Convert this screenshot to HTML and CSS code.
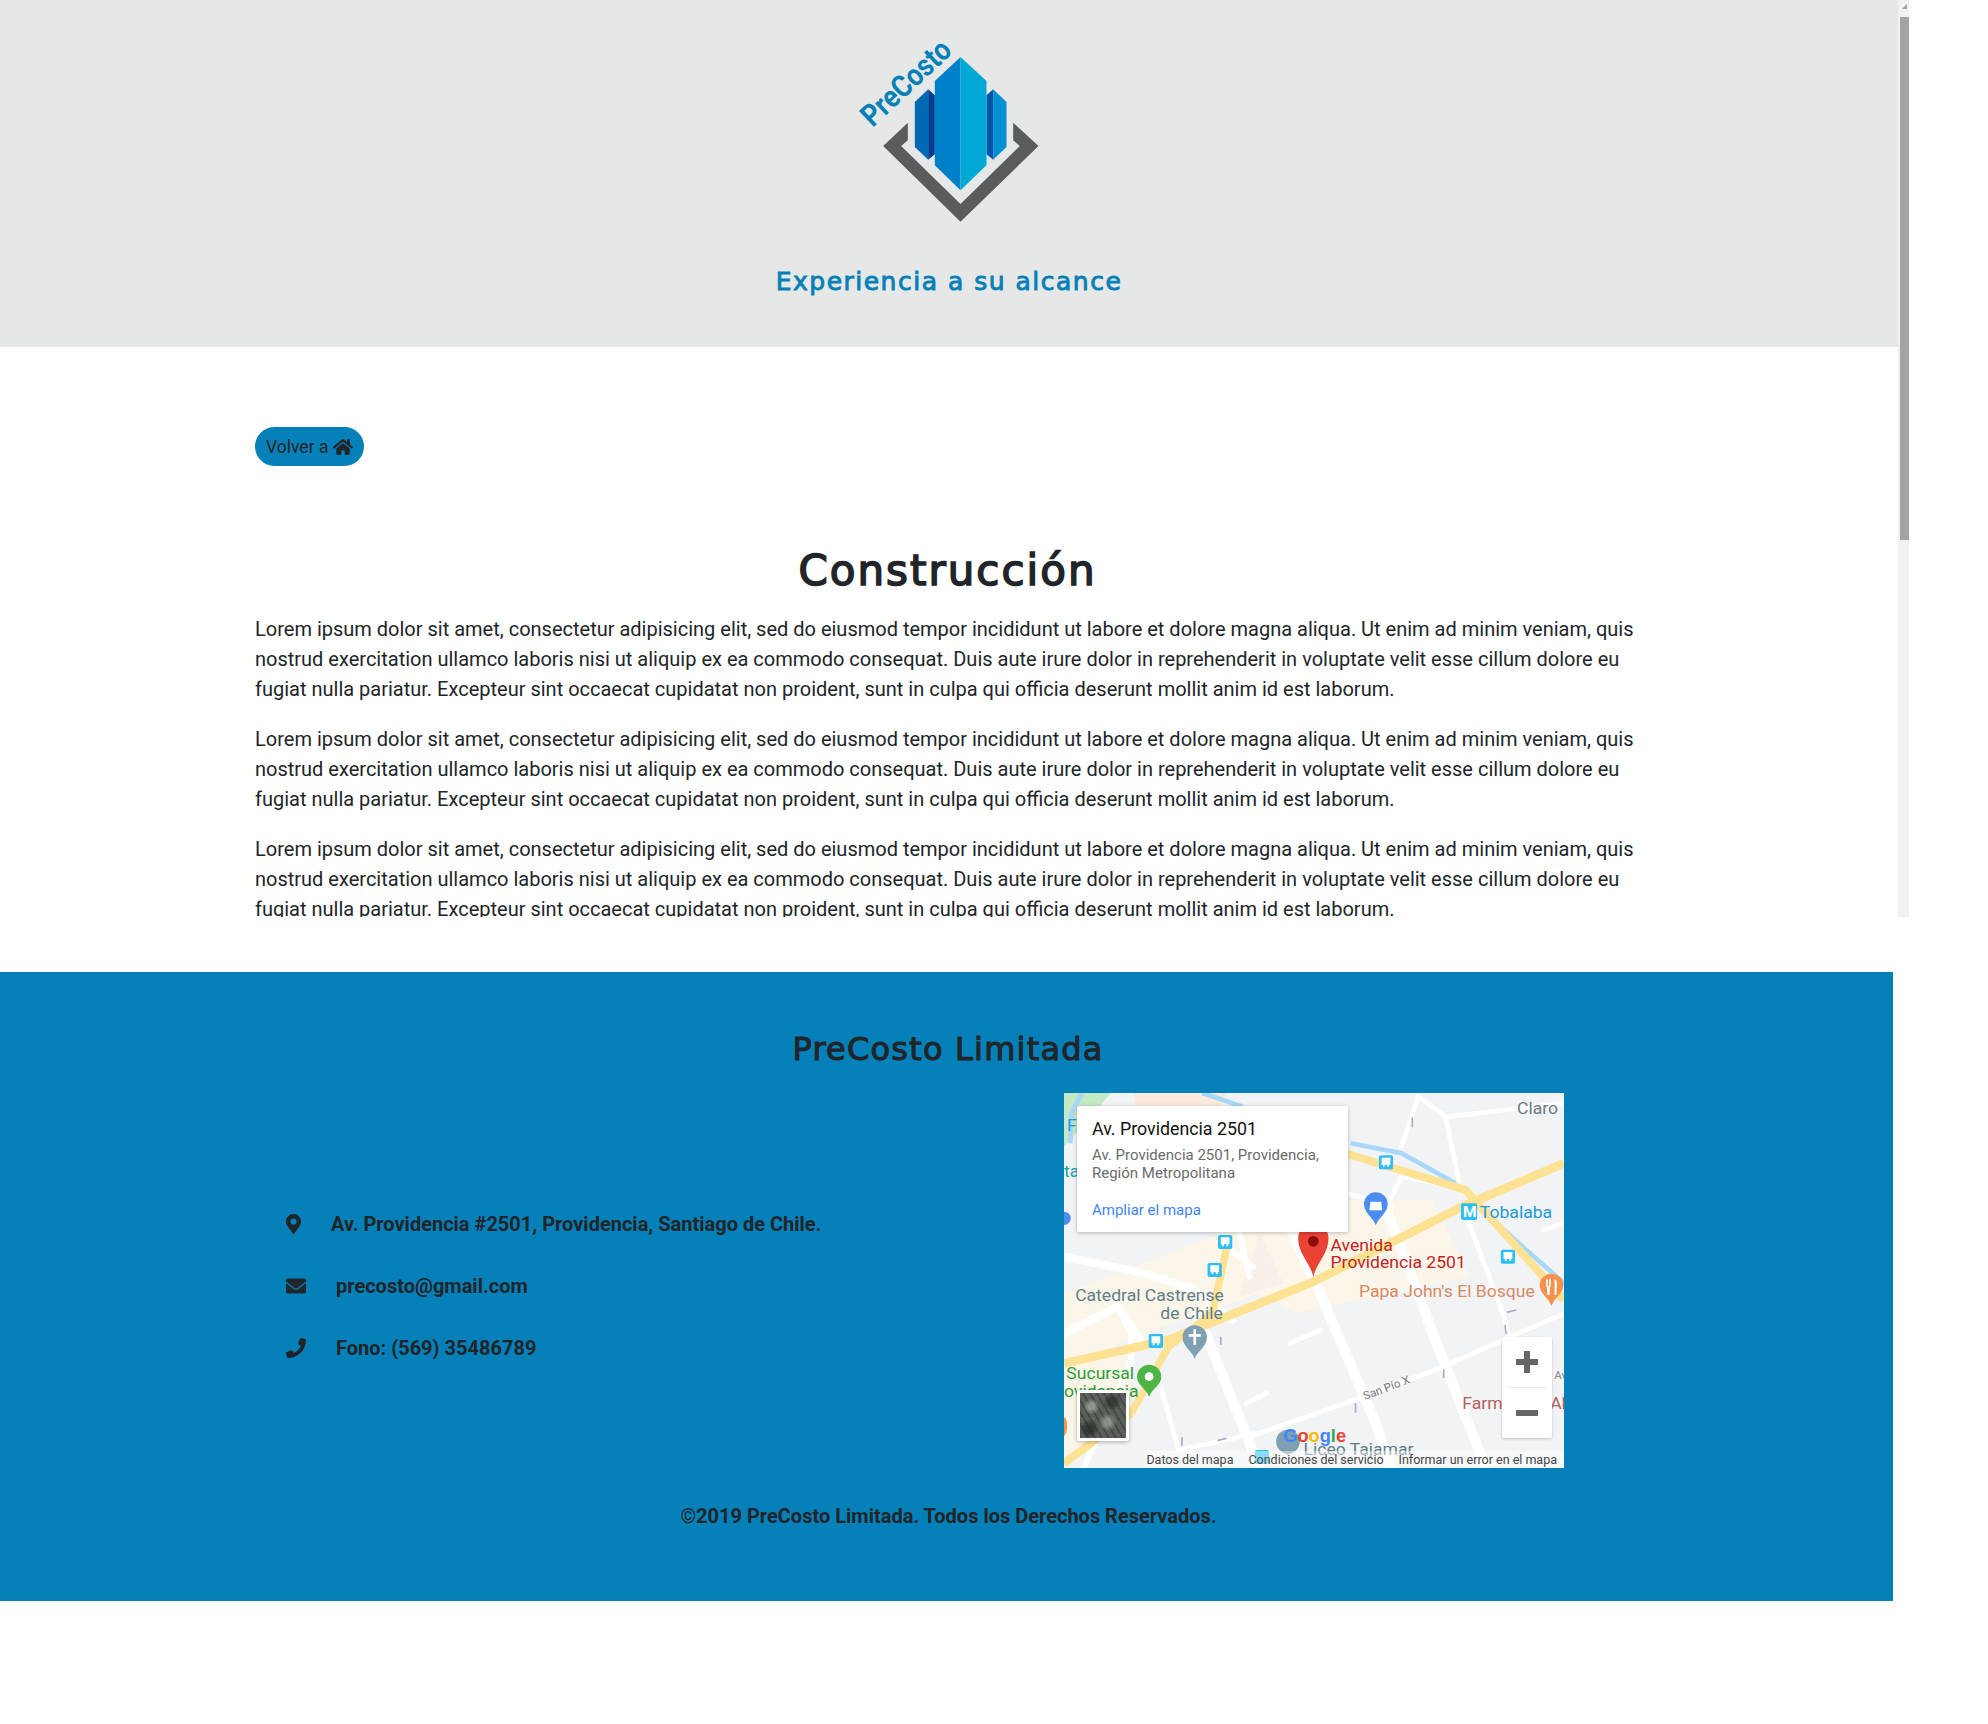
FILE: index.html
```html
<!DOCTYPE html>
<html lang="es">
<head>
  <meta charset="UTF-8" />
  <title>PreCosto Limitada</title>
  <link rel="stylesheet" href="styles.css">
</head>
<body>
  <div class="frame">
    <div class="frame-content">
      <header class="site-header">
        <svg class="logo" viewBox="295 125 545 540" aria-label="PreCosto">
          <polygon fill="#5a5b5d" points="444,367 370,437 602,664 836,437 760,367 760,420 780,437 602,611 424,437 444,420"/>
          <polygon fill="#0069b4" points="505,267 465,305 465,440 505,478"/>
          <polygon fill="#003e92" points="505,267 525,285 525,462 505,478"/>
          <polygon fill="#0057a8" points="700,267 680,285 680,462 700,478"/>
          <polygon fill="#008fd5" points="700,267 740,305 740,440 700,478"/>
          <polygon fill="#0080c6" points="602,170 525,242 525,495 602,570"/>
          <polygon fill="#00a8d6" points="602,170 680,242 680,495 602,570"/>
          <text class="logo-text" x="0" y="0" transform="translate(338,383) rotate(-43)" textLength="332" lengthAdjust="spacingAndGlyphs">PreCosto</text>
        </svg>
        <h2 class="tagline">Experiencia a su alcance</h2>
      </header>

      <main class="content">
        <a class="btn-back" href="#">Volver a
          <svg class="icon-home" viewBox="0 0 576 512"><path d="M280 148 96 300v164c0 9 7 16 16 16l112-1c9 0 16-7 16-16v-95c0-9 7-16 16-16h64c9 0 16 7 16 16v95c0 9 7 16 16 16l112 1c9 0 16-7 16-16V300L296 148c-4-4-12-4-16 0zM572 251l-84-69V44c0-7-5-12-12-12h-56c-7 0-12 5-12 12v72l-89-74c-18-14-43-14-61 0L4 251c-5 4-6 12-2 17l26 31c4 5 12 6 17 2L280 107c4-4 12-4 16 0l235 194c5 4 13 3 17-2l26-31c4-5 3-13-2-17z"/></svg>
        </a>
        <h1 class="page-title">Construcción</h1>
        <p>Lorem ipsum dolor sit amet, consectetur adipisicing elit, sed do eiusmod tempor incididunt ut labore et dolore magna aliqua. Ut enim ad minim veniam, quis nostrud exercitation ullamco laboris nisi ut aliquip ex ea commodo consequat. Duis aute irure dolor in reprehenderit in voluptate velit esse cillum dolore eu fugiat nulla pariatur. Excepteur sint occaecat cupidatat non proident, sunt in culpa qui officia deserunt mollit anim id est laborum.</p>
        <p>Lorem ipsum dolor sit amet, consectetur adipisicing elit, sed do eiusmod tempor incididunt ut labore et dolore magna aliqua. Ut enim ad minim veniam, quis nostrud exercitation ullamco laboris nisi ut aliquip ex ea commodo consequat. Duis aute irure dolor in reprehenderit in voluptate velit esse cillum dolore eu fugiat nulla pariatur. Excepteur sint occaecat cupidatat non proident, sunt in culpa qui officia deserunt mollit anim id est laborum.</p>
        <p>Lorem ipsum dolor sit amet, consectetur adipisicing elit, sed do eiusmod tempor incididunt ut labore et dolore magna aliqua. Ut enim ad minim veniam, quis nostrud exercitation ullamco laboris nisi ut aliquip ex ea commodo consequat. Duis aute irure dolor in reprehenderit in voluptate velit esse cillum dolore eu fugiat nulla pariatur. Excepteur sint occaecat cupidatat non proident, sunt in culpa qui officia deserunt mollit anim id est laborum.</p>
      </main>
    </div>
    <div class="scrollbar">
      <div class="scroll-arrow"></div>
      <div class="scroll-thumb"></div>
    </div>
  </div>

  <footer class="site-footer">
    <h2 class="footer-title">PreCosto Limitada</h2>
    <div class="footer-row">
      <ul class="contact-list">
        <li class="contact-item">
          <svg class="icon icon-pin" viewBox="0 0 384 512"><path d="M172 502C27 291 0 269 0 192 0 86 86 0 192 0s192 86 192 192c0 77-27 99-172 310-10 14-30 14-40 0zm20-230a80 80 0 1 0 0-160 80 80 0 0 0 0 160z"/></svg>
          Av. Providencia #2501, Providencia, Santiago de Chile.
        </li>
        <li class="contact-item contact-wide">
          <svg class="icon" viewBox="0 0 512 512"><path d="M502 191c4-3 10 0 10 5v204c0 27-21 48-48 48H48c-27 0-48-21-48-48V196c0-5 6-8 10-5 22 17 52 39 154 113 21 15 57 48 92 48s72-33 92-48c102-74 132-96 154-113zM256 320c23 0 57-29 73-41 133-96 143-105 174-129 6-5 9-12 9-19v-19c0-27-21-48-48-48H48C21 64 0 85 0 112v19c0 7 3 14 9 19 31 24 41 33 174 129 16 12 50 41 73 41z"/></svg>
          precosto@gmail.com
        </li>
        <li class="contact-item contact-wide">
          <svg class="icon" viewBox="0 0 512 512"><path d="m493 24-104-24c-11-3-23 3-27 14l-48 112c-4 10-1 21 7 28l60 50c-36 77-99 140-177 177l-50-60c-7-8-18-11-28-7L14 362c-11 5-17 16-14 28l24 104c2 10 12 18 23 18 256 0 465-207 465-464 0-11-8-21-19-24z"/></svg>
          Fono: (569) 35486789
        </li>
      </ul>

      <div class="map">
        <svg class="map-canvas" viewBox="41 39 1480 1125" preserveAspectRatio="none">
          <rect x="41" y="39" width="1480" height="1125" fill="#f1f3f4"/>
          <!-- blocks -->
          <polygon fill="#fbf6e8" points="41,640 250,560 560,440 880,360 1130,360 1240,590 730,700 620,640 280,760 41,860"/>
          <polygon fill="#f8eeea" points="560,650 620,460 690,610"/>
          <polygon fill="#c5e8c5" points="41,39 180,39 41,200"/>
          <polygon fill="#fde9d9" points="250,39 520,39 500,100 250,100"/>
          <polygon fill="#fbf6e8" points="41,860 240,800 240,1000 41,1150"/>
          <!-- white streets -->
          <g fill="none" stroke="#fff" stroke-linecap="round">
            <path stroke-width="24" d="M41 530 280 580 430 630 540 720M41 760 200 680 280 800 360 780"/>
            <path stroke-width="30" d="M700 420 790 620 960 1020 1010 1164"/>
            <path stroke-width="30" d="M460 760 620 1164M1000 400 1140 780 1290 1164"/>
            <path stroke-width="14" d="M1090 50 1170 110 1210 300 M1180 110 1521 70M1040 200 1090 50M880 340 1010 380M1000 370 1040 290 1150 310M1240 430 1340 700 1420 1000"/>
            <path stroke-width="14" d="M590 1070 930 950 1140 870 1521 700M330 930 380 1110 520 1080 610 1060M710 790 800 750M580 970 640 940M1460 450 1521 430"/>
            <path stroke-width="18" d="M560 460 590 590M520 500 600 560M200 680 240 760 240 840 100 1164"/>
          </g>
          <!-- canal -->
          <g fill="none" stroke="#a8d8f8" stroke-width="14">
            <path d="M890 190 1040 220 1200 310M1310 420 1521 610"/>
            <path d="M60 190 62 100 95 40M450 39 570 80"/>
          </g>
          <!-- avenues -->
          <g fill="none" stroke="#fde293" stroke-linecap="butt">
            <path stroke-width="26" d="M41 850 350 780 780 605 1230 375 1521 250"/>
            <path stroke-width="22" d="M240 1000 350 800 480 700 530 470"/>
            <path stroke-width="24" d="M41 1150 240 1000"/>
            <path stroke-width="24" d="M880 222 1230 330 1521 660"/>
          </g>
          <!-- bus stops -->
          <g fill="#2ebdf5">
            <rect x="973" y="226" width="42" height="42" rx="5"/>
            <rect x="497" y="465" width="42" height="42" rx="5"/>
            <rect x="466" y="549" width="42" height="42" rx="5"/>
            <rect x="292" y="762" width="42" height="42" rx="5"/>
            <rect x="1334" y="509" width="42" height="42" rx="5"/>
            <rect x="606" y="1110" width="42" height="42" rx="5"/>
          </g>
          <g fill="#fff">
            <path d="M981 233h26v21h-4v6h-5v-6h-8v6h-5v-6h-4z"/>
            <path d="M505 472h26v21h-4v6h-5v-6h-8v6h-5v-6h-4z"/>
            <path d="M474 556h26v21h-4v6h-5v-6h-8v6h-5v-6h-4z"/>
            <path d="M300 769h26v21h-4v6h-5v-6h-8v6h-5v-6h-4z"/>
            <path d="M1342 516h26v21h-4v6h-5v-6h-8v6h-5v-6h-4z"/>
          </g>
          <!-- metro -->
          <rect x="1216" y="370" width="48" height="50" rx="6" fill="#2ebdf5"/>
          <text class="map-label metro-m" x="1222" y="412">M</text>
          <!-- place pins -->
          <path fill="#4b8cf0" d="M964 436C955 410 929 400 929 372a35 35 0 0 1 70 0C999 400 973 410 964 436z"/>
          <path fill="#fff" d="M948 365h32l3 26h-38z"/>
          <path fill="#7f9fb3" d="M428 836C418 810 392 800 392 772a36 36 0 0 1 72 0C464 800 438 810 428 836z"/>
          <path fill="#fff" d="M424 748h8v14h14v8h-14v24h-8v-24h-14v-8h14z"/>
          <path fill="#4db546" d="M293 950C284 925 257 915 257 890a36 36 0 0 1 72 0C329 915 302 925 293 950z"/>
          <circle cx="293" cy="890" r="13" fill="#fff"/>
          <path fill="#f5924c" d="M1484 678C1475 652 1449 642 1449 616a35 35 0 0 1 70 0C1519 642 1493 652 1484 678z"/>
          <path fill="#fff" d="M1468 598h5v20h4v-20h5v20l-3 4v22h-8v-22l-3-4zM1493 598c8 2 9 16 6 26v20h-6z"/>
          <circle cx="41" cy="415" r="20" fill="#4b8cf0"/>
          <path fill="#f5924c" d="M41 1012c12 0 12 50 0 56z"/>
          <path fill="#7f9fb3" d="M704 1124c-20-6-35-18-35-40a35 35 0 0 1 70 0c0 22-15 34-35 40z"/>
          <!-- labels -->
          <text class="map-label" x="1382" y="102" fill="#6f7b86">Claro</text>
          <text class="map-label" x="1272" y="413" fill="#1e9bd8">Tobalaba</text>
          <text class="map-label" x="50" y="154" fill="#1e9bd8">F</text>
          <text class="map-label" x="41" y="290" fill="#14a3a3">ta</text>
          <text class="map-label" x="830" y="512" fill="#c5221f">Avenida</text>
          <text class="map-label" x="830" y="564" fill="#c5221f">Providencia 2501</text>
          <text class="map-label" x="914" y="650" fill="#d88a63">Papa John's El Bosque</text>
          <text class="map-label" x="74" y="664" fill="#607d8b">Catedral Castrense</text>
          <text class="map-label" x="326" y="716" fill="#607d8b">de Chile</text>
          <text class="map-label" x="48" y="898" fill="#2e9e3a">Sucursal</text>
          <text class="map-label" x="41" y="950" fill="#2e9e3a">ovidencia</text>
          <text class="map-label" x="1220" y="986" fill="#b56060">Farm</text>
          <text class="map-label" x="1480" y="986" fill="#b56060">Al</text>
          <text class="map-label map-small" x="1492" y="896" fill="#888">Av</text>
          <text class="map-label map-small" transform="translate(932,960) rotate(-21)" fill="#777">San Pío X</text>
          <text class="map-label" x="750" y="1124" fill="#607d8b">Liceo Tajamar</text>
          <!-- street arrows -->
          <g fill="none" stroke="#a9adc8" stroke-width="5">
            <path d="M1072 112 1072 142M1352 697 1380 690M1346 735 1350 762M1165 868 1165 894M904 970 904 998M505 770 505 795M390 1072 390 1098M495 1082 522 1075"/>
          </g>
          <!-- red marker -->
          <path fill="#ea4335" d="M779 592c-6-40-45-68-45-118a45 45 0 0 1 90 0c0 50-39 78-45 118z"/>
          <circle cx="779" cy="484" r="16" fill="#8e0f07"/>
          <!-- google logo -->
          <text class="google" x="690" y="1086"><tspan fill="#4285f4">G</tspan><tspan fill="#ea4335">o</tspan><tspan fill="#fbbc05">o</tspan><tspan fill="#4285f4">g</tspan><tspan fill="#34a853">l</tspan><tspan fill="#ea4335">e</tspan></text>
        </svg>

        <div class="map-card">
          <div class="map-card-title">Av. Providencia 2501</div>
          <div class="map-card-addr">Av. Providencia 2501, Providencia, Región Metropolitana</div>
          <a class="map-card-link" href="#">Ampliar el mapa</a>
        </div>

        <div class="map-thumb"></div>

        <div class="zoom-ctrl">
          <span class="zoom-plus"></span>
          <span class="zoom-sep"></span>
          <span class="zoom-minus"></span>
        </div>

        <div class="map-terms">
          <span>Datos del mapa</span>
          <span>Condiciones del servicio</span>
          <span>Informar un error en el mapa</span>
        </div>
      </div>
    </div>
    <p class="copyright">©2019 PreCosto Limitada. Todos los Derechos Reservados.</p>
  </footer>
</body>
</html>
```

FILE: styles.css
```css
* {
  box-sizing: border-box;
}

body {
  margin: 0;
  font-family: Roboto, sans-serif;
  color: #212529;
  background: #fff;
}

.frame {
  display: flex;
  width: 1909px;
  height: 917px;
}

.frame-content {
  flex: 1;
  overflow: hidden;
}

.scrollbar {
  width: 11px;
  background: #f1f1f1;
  padding-left: 2px;
}

.scroll-arrow {
  width: 0;
  height: 0;
  margin: 4px 0 8px 2px;
  border-left: 5px solid transparent;
  border-bottom: 5px solid #a3a3a3;
}

.scroll-thumb {
  height: 523px;
  background: #a3a3a3;
}

.site-header {
  height: 347px;
  background: #e6e8e8;
  padding-top: 42px;
  text-align: center;
}

.logo {
  display: block;
  width: 182px;
  height: 180px;
  margin: 0 auto;
  overflow: visible;
}

.logo-text {
  font-family: Roboto, sans-serif;
  font-weight: 700;
  font-size: 92px;
  fill: #0580b8;
}

.tagline {
  margin: 43px 0 0;
  font-family: "DejaVu Sans", sans-serif;
  font-size: 25px;
  font-weight: 400;
  letter-spacing: 1.5px;
  line-height: 34px;
  color: #0580b8;
  -webkit-text-stroke: 0.9px #0580b8;
}

.content {
  padding: 80px 0 0 255px;
  width: 1640px;
}

.btn-back {
  display: inline-flex;
  align-items: center;
  gap: 5px;
  height: 39px;
  padding: 0 11px;
  background: #0580b8;
  border-radius: 20px;
  color: #212529;
  font-size: 17.5px;
  text-decoration: none;
}

.icon-home {
  width: 20px;
  height: 18px;
  fill: #212529;
}

.page-title {
  margin: 81px 0 19px;
  font-family: "DejaVu Sans", sans-serif;
  font-size: 42px;
  font-weight: 400;
  letter-spacing: 2px;
  line-height: 48px;
  text-align: center;
  -webkit-text-stroke: 1.6px #212529;
}

.content p {
  margin: 0 0 20px;
  font-size: 20px;
  line-height: 30px;
}

.site-footer {
  width: 1893px;
  height: 629px;
  margin-top: 55px;
  padding-top: 56px;
  background: #0580b8;
}

.footer-title {
  margin: 0 0 23px;
  padding-left: 3px;
  font-family: "DejaVu Sans", sans-serif;
  font-size: 32px;
  font-weight: 400;
  letter-spacing: 1.2px;
  line-height: 42px;
  text-align: center;
  -webkit-text-stroke: 1.1px #212529;
}

.footer-row {
  display: flex;
  align-items: center;
  justify-content: space-between;
  padding-left: 286px;
  padding-right: 329px;
}

.contact-list {
  margin: 0;
  padding: 10px 0 0;
  list-style: none;
  font-size: 20px;
  font-weight: 700;
}

.contact-item {
  display: flex;
  align-items: center;
  gap: 30px;
  height: 62px;
}

.icon {
  width: 20px;
  height: 20px;
  fill: #212529;
}

.icon-pin {
  width: 15px;
}

.map {
  position: relative;
  width: 500px;
  height: 375px;
  overflow: hidden;
}

.map-canvas {
  display: block;
  width: 500px;
  height: 375px;
}

.map-label {
  font-family: Roboto, sans-serif;
  font-size: 52px;
}

.map-small {
  font-size: 34px;
}

.metro-m {
  font-size: 46px;
  font-weight: 700;
  fill: #fff;
}

.google {
  font-family: "Liberation Sans", sans-serif;
  font-size: 54px;
  font-weight: 700;
}

.map-card {
  position: absolute;
  left: 13px;
  top: 13px;
  width: 271px;
  height: 126px;
  padding: 13px 15px;
  background: #fff;
  border-radius: 2px;
  box-shadow: 0 1px 4px rgba(0, 0, 0, 0.25);
}

.map-card-title {
  font-size: 17.8px;
  font-weight: 400;
  color: #111;
  line-height: 20px;
}

.map-card-addr {
  margin-top: 7px;
  font-size: 15px;
  line-height: 18px;
  color: #6b6b6b;
  width: 245px;
}

.map-card-link {
  display: block;
  margin-top: 19px;
  font-size: 15px;
  color: #4285f4;
  text-decoration: none;
}

.map-thumb {
  position: absolute;
  left: 13px;
  bottom: 27px;
  width: 52px;
  height: 51px;
  border: 3px solid #fff;
  border-radius: 2px;
  box-shadow: 0 1px 4px rgba(0, 0, 0, 0.3);
  background-color: #5c605a;
  background-image:
    radial-gradient(circle at 25% 30%, rgba(170, 175, 170, 0.7) 0 3px, transparent 8px),
    radial-gradient(circle at 70% 20%, rgba(40, 45, 40, 0.7) 0 4px, transparent 9px),
    radial-gradient(circle at 60% 65%, rgba(175, 180, 175, 0.6) 0 3px, transparent 9px),
    radial-gradient(circle at 20% 80%, rgba(35, 40, 35, 0.7) 0 4px, transparent 10px),
    repeating-linear-gradient(60deg, rgba(30, 35, 30, 0.35) 0 2px, transparent 2px 6px);
}

.zoom-ctrl {
  position: absolute;
  right: 12px;
  top: 244px;
  width: 50px;
  height: 101px;
  background: #fff;
  border-radius: 2px;
  box-shadow: 0 1px 3px rgba(0, 0, 0, 0.2);
}

.zoom-plus,
.zoom-minus,
.zoom-sep {
  position: absolute;
  display: block;
}

.zoom-sep {
  left: 6px;
  right: 6px;
  top: 50px;
  height: 1px;
  background: #e6e6e6;
}

.zoom-plus {
  left: 14px;
  top: 14px;
  width: 22px;
  height: 22px;
  background:
    linear-gradient(#666, #666) center / 22px 6px no-repeat,
    linear-gradient(#666, #666) center / 6px 22px no-repeat;
}

.zoom-minus {
  left: 14px;
  top: 73px;
  width: 22px;
  height: 6px;
  background: #666;
}

.map-terms {
  position: absolute;
  right: 0;
  bottom: 0;
  height: 17px;
  width: 420px;
  display: flex;
  justify-content: flex-end;
  gap: 15px;
  padding-right: 7px;
  background: rgba(255, 255, 255, 0.45);
  font-size: 12.5px;
  line-height: 17px;
  color: #444;
  white-space: nowrap;
}

.copyright {
  margin: 34px 0 0;
  padding-left: 4px;
  font-size: 20px;
  font-weight: 700;
  line-height: 28px;
  text-align: center;
}
```
